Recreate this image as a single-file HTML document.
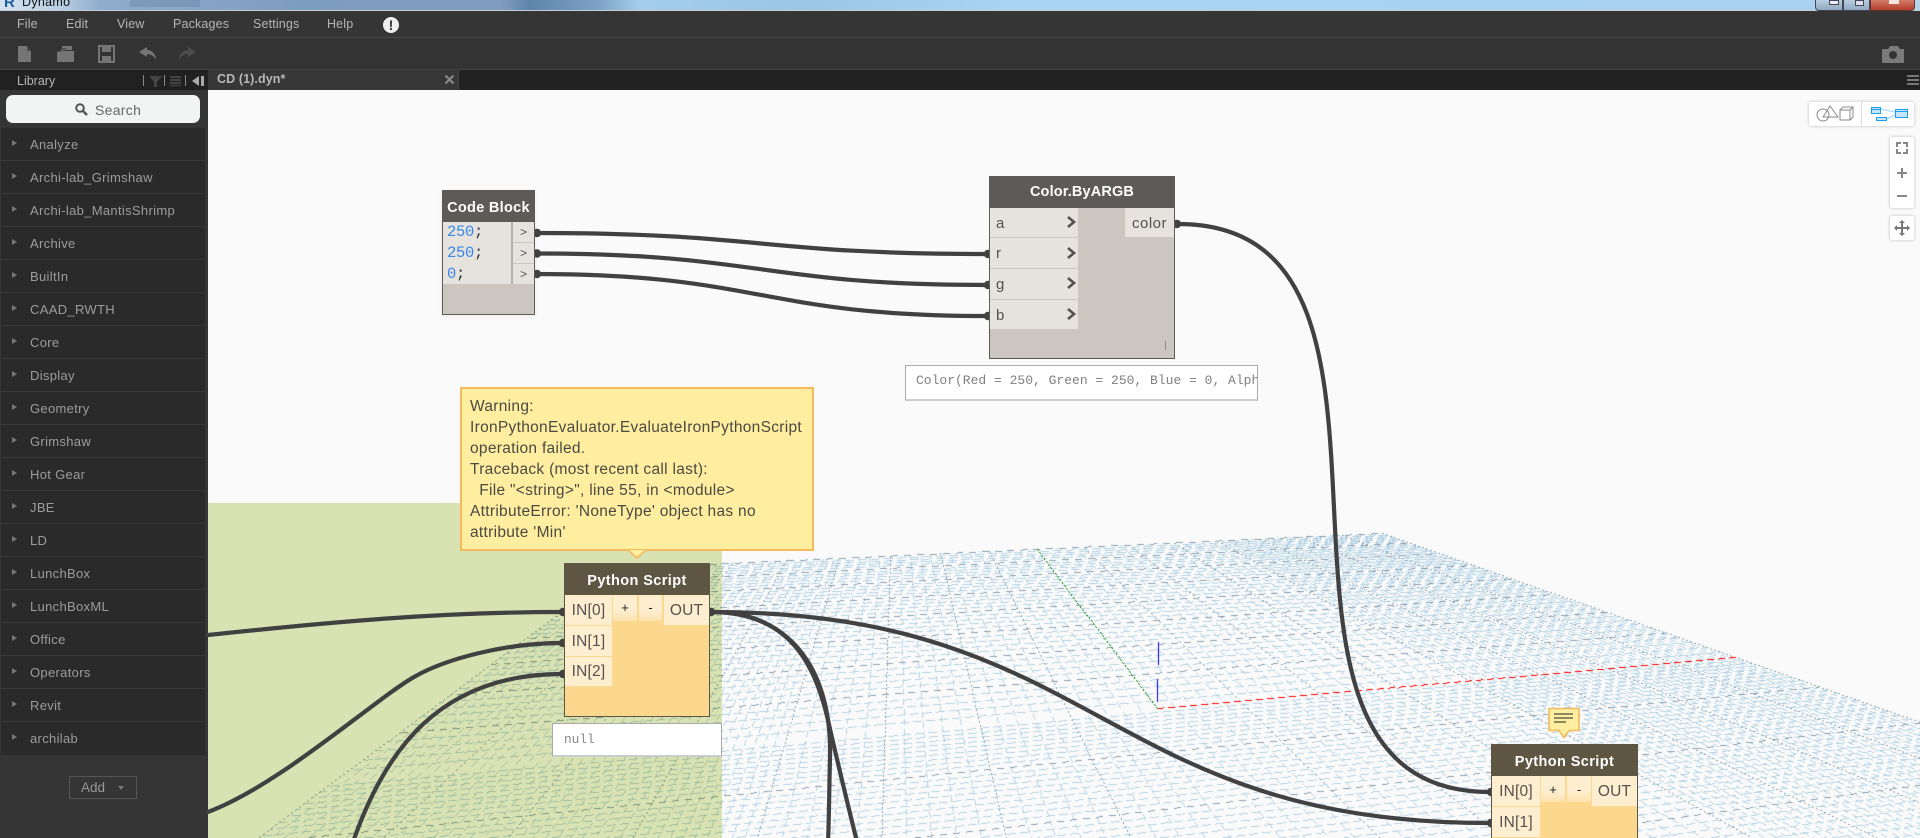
<!DOCTYPE html>
<html><head><meta charset="utf-8"><title>Dynamo</title>
<style>
html,body{margin:0;padding:0;width:1920px;height:838px;overflow:hidden;background:#fafafa;font-family:"Liberation Sans",sans-serif}
.a{position:absolute;white-space:nowrap;box-sizing:border-box}
#root{position:absolute;left:0;top:0;width:1920px;height:838px;overflow:hidden}
.m{color:#b5b5b5;font-size:12.5px;top:17px;letter-spacing:.15px}
.li{left:1px;width:204px;height:33px;background:#2a2a2a;border-bottom:1px solid #3a3a3a;color:#9c9c9c;font-size:13px;letter-spacing:.32px;line-height:34px;padding-left:29px}
.li:before{content:"";position:absolute;left:11px;top:12px;border-left:5px solid #777;border-top:3.5px solid transparent;border-bottom:3.5px solid transparent}
.hd{color:#fff;font-weight:bold;font-size:14.5px;text-align:center}
.row{background:#e6e3de;color:#55514f;font-size:15px;letter-spacing:.5px;padding-left:6px}
.py{background:#fdeed0;color:#55514f;font-size:15.5px;text-align:center;letter-spacing:.2px}
.tip{font-size:15.5px;color:#4a4a42;letter-spacing:.3px}
.mono{font-family:"Liberation Mono",monospace}
</style></head>
<body><div id="root">
<!-- canvas background -->
<div class="a" style="left:208px;top:90px;width:1712px;height:748px;background:#fafafa"></div>
<canvas id="g" width="1712" height="748" class="a" style="left:208px;top:90px"></canvas>
<div class="a" style="left:208px;top:503px;width:514px;height:335px;background:#dee7b6;mix-blend-mode:multiply"></div>

<!-- title bar -->
<div class="a" style="left:0;top:0;width:1920px;height:10px;background:linear-gradient(90deg,#d4e2ee 0,#b9cfe3 60px,#8fadcd 100px,#7d9dc0 300px,#7f9dbf 500px,#5f84ab 530px,#7fa3c6 600px,#a4cdec 640px,#9cc6e6 800px,#a8d3f2 1000px,#a8d2f0 1810px,#b5d5ec 1920px)"></div>
<div class="a" style="left:130px;top:0;width:70px;height:7px;background:#6d88a6;opacity:.45"></div>
<div class="a" style="left:0;top:10px;width:1920px;height:1px;background:#c5cdd6"></div>
<div class="a" style="left:4px;top:0;width:12px;height:10px;color:#1d5e9e;font-weight:bold;font-size:15px;line-height:6px;overflow:hidden">R</div>
<div class="a" style="left:22px;top:-5px;font-size:12.5px;color:#111;line-height:14px;letter-spacing:.3px">Dynamo</div>
<div class="a" style="left:1815px;top:-2px;width:28px;height:13px;background:linear-gradient(#bcd0e2,#8fa9c0);border:1px solid #445;border-radius:0 0 0 4px"></div>
<div class="a" style="left:1843px;top:-2px;width:27px;height:13px;background:linear-gradient(#bcd0e2,#8fa9c0);border:1px solid #445"></div>
<div class="a" style="left:1870px;top:-2px;width:45px;height:13px;background:linear-gradient(#d8836f,#b23d2a);border:1px solid #633;border-radius:0 0 4px 0"></div>
<div class="a" style="left:1829px;top:0;width:10px;height:5px;background:#eef;border:1px solid #445"></div>
<div class="a" style="left:1855px;top:0;width:9px;height:6px;background:#dde;border:1px solid #445"></div>
<div class="a" style="left:1889px;top:0;width:10px;height:4px;background:#f4e4e0"></div>

<!-- menu -->
<div class="a" style="left:0;top:11px;width:1920px;height:27px;background:#353535;border-bottom:1px solid #474747"></div>
<div class="a m" style="left:17px">File</div>
<div class="a m" style="left:66px">Edit</div>
<div class="a m" style="left:117px">View</div>
<div class="a m" style="left:173px">Packages</div>
<div class="a m" style="left:253px">Settings</div>
<div class="a m" style="left:327px">Help</div>
<div class="a" style="left:383px;top:17px;width:16px;height:16px;border-radius:50%;background:#efefef;color:#333;font-weight:bold;font-size:14px;text-align:center;line-height:16px">!</div>

<!-- toolbar -->
<div class="a" style="left:0;top:38px;width:1920px;height:32px;background:#333;border-bottom:1px solid #444"></div>
<svg class="a" style="left:0;top:38px" width="220" height="32" viewBox="0 38 220 32">
<path d="M18 46h9l4 5v11H18z" fill="#757575"/><path d="M27 46l4 5h-4z" fill="#4a4a4a"/>
<path d="M62 46h10v4H62zM57 52l5-1h12v11H57z" fill="#757575"/><path d="M60 51l2-3h5l-2 3z" fill="#555"/>
<path d="M99 46h15v16H99z" fill="none" stroke="#757575" stroke-width="2"/><path d="M102 47h9v5h-9zM102 56h9v5h-9z" fill="#757575"/>
<path d="M139 52l8-5v3c5 0 9 4 9 10-2-4-5-6-9-6v3z" fill="#757575"/>
<path d="M196 52l-8-5v3c-5 0-9 4-9 10 2-4 5-6 9-6v3z" fill="#4c4c4c"/>
</svg>
<svg class="a" style="left:1880px;top:44px" width="30" height="24"><path d="M2 5h6l2-3h8l2 3h4v14H2z" fill="#7a7a7a"/><circle cx="13" cy="11" r="4" fill="#333"/></svg>

<!-- tab row -->
<div class="a" style="left:0;top:70px;width:208px;height:20px;background:#212121"></div>
<div class="a" style="left:208px;top:70px;width:250px;height:20px;background:#373737"></div>
<div class="a" style="left:458px;top:70px;width:1462px;height:20px;background:#222;border-left:1px solid #444"></div>
<div class="a" style="left:17px;top:74px;font-size:12.5px;color:#b5b5b5">Library</div>
<div class="a" style="left:217px;top:72px;font-size:12.5px;font-weight:bold;color:#b8b8b8;letter-spacing:.1px">CD (1).dyn*</div>
<svg class="a" style="left:140px;top:72px" width="70" height="18"><path d="M3.5 3v11M24.5 3v11M45.5 3v11" stroke="#888"/><path d="M9 4h13l-5 6v5h-3v-5z" fill="#444"/><path d="M30 4h11v2H30zM30 7h11v2H30zM30 10h11v2H30zM30 13h11v1H30z" fill="#444"/><path d="M59 4v10l-7-5z" fill="#aaa"/><path d="M61 4h3v10h-3z" fill="#aaa"/></svg>
<svg class="a" style="left:443px;top:73px" width="14" height="14"><path d="M2.5 2.5l8 8M10.5 2.5l-8 8" stroke="#8a8a8a" stroke-width="2"/></svg>
<div class="a" style="left:1907px;top:75px;width:12px;height:2px;background:#777;box-shadow:0 4px 0 #777,0 8px 0 #777"></div>

<!-- sidebar -->
<div class="a" style="left:0;top:90px;width:208px;height:748px;background:#353535"></div>
<div class="a" style="left:6px;top:95px;width:194px;height:28px;background:#f2f3f3;border-radius:7px"></div>
<svg class="a" style="left:74px;top:102px" width="14" height="14"><circle cx="6" cy="6" r="3.8" fill="none" stroke="#555" stroke-width="2"/><path d="M9 9l4 4" stroke="#555" stroke-width="2.4"/></svg>
<div class="a" style="left:95px;top:102px;font-size:14px;color:#666;letter-spacing:.3px">Search</div>
<div class="a li" style="top:128px">Analyze</div>
<div class="a li" style="top:161px">Archi-lab_Grimshaw</div>
<div class="a li" style="top:194px">Archi-lab_MantisShrimp</div>
<div class="a li" style="top:227px">Archive</div>
<div class="a li" style="top:260px">BuiltIn</div>
<div class="a li" style="top:293px">CAAD_RWTH</div>
<div class="a li" style="top:326px">Core</div>
<div class="a li" style="top:359px">Display</div>
<div class="a li" style="top:392px">Geometry</div>
<div class="a li" style="top:425px">Grimshaw</div>
<div class="a li" style="top:458px">Hot Gear</div>
<div class="a li" style="top:491px">JBE</div>
<div class="a li" style="top:524px">LD</div>
<div class="a li" style="top:557px">LunchBox</div>
<div class="a li" style="top:590px">LunchBoxML</div>
<div class="a li" style="top:623px">Office</div>
<div class="a li" style="top:656px">Operators</div>
<div class="a li" style="top:689px">Revit</div>
<div class="a li" style="top:722px;border-bottom:0">archilab</div>
<div class="a" style="left:69px;top:776px;width:68px;height:23px;border:1px solid #555;color:#999;font-size:13.5px;line-height:21px;padding-left:11px">Add</div>
<div class="a" style="left:118px;top:786px;border-top:4px solid #777;border-left:3px solid transparent;border-right:3px solid transparent"></div>

<!-- top right controls -->
<div class="a" style="left:1809px;top:102px;width:105px;height:24px;background:#fff;box-shadow:0 0 3px #bbb;border-radius:2px"></div>
<div class="a" style="left:1861px;top:102px;width:1px;height:24px;background:#ddd"></div>
<svg class="a" style="left:1809px;top:102px" width="105" height="24" fill="none">
<circle cx="14" cy="13" r="6" stroke="#888"/><path d="M21 4l8 11H14z" stroke="#888"/><path d="M31 8h10v10H31zM31 8l3-3h10v10l-3 3M41 8l3-3" stroke="#888"/>
<path d="M62.5 5.5h9v6h-9zM86.5 7.5h12v8h-12zM67.5 15.5h10v3h-10z" fill="#c8e4fa" stroke="#18a0f0"/><path d="M63 7.5h9M87 9.5h11" stroke="#18a0f0"/>
<path d="M72 7l14 3M78 17l8-4" stroke="#9ad4f8"/></svg>
<div class="a" style="left:1890px;top:137px;width:24px;height:71px;background:#fff;box-shadow:0 0 3px #bbb;border-radius:2px"></div>
<svg class="a" style="left:1890px;top:137px" width="24" height="71" fill="none" stroke="#888" stroke-width="2">
<path d="M7 10V6h4M13 6h4v4M17 12v4h-4M11 16H7v-4"/><path d="M12 31v10M7 36h10"/><path d="M7 59h10"/></svg>
<div class="a" style="left:1890px;top:216px;width:24px;height:24px;background:#fff;box-shadow:0 0 3px #bbb;border-radius:2px"></div>
<svg class="a" style="left:1890px;top:216px" width="24" height="24"><path d="M12 4l3 3h-2v4h4V9l3 3-3 3v-2h-4v4h2l-3 3-3-3h2v-4H7v2l-3-3 3-3v2h4V7H9z" fill="#777"/></svg>

<!-- wires -->
<svg class="a" style="left:0;top:0" width="1920" height="838" fill="none" stroke="#414141" stroke-width="4.2" stroke-linecap="round">
<path d="M536 233C760 233 762 254 987 254"/>
<path d="M536 253.5C760 253.5 762 285 987 285"/>
<path d="M536 274C760 274 762 316 987 316"/>
<path d="M1178 224C1462 224 1206 792 1490 792"/>
<path d="M208 635C330 622 440 612 562 612"/>
<path d="M208 812C280 785 374 700 414 677C445 659 505 643 562 643"/>
<path d="M353 842C385 750 440 674 562 674"/>
<path d="M712 612C1100 612 1102 823 1490 823"/>
<path d="M712 612C790 612 832 670 830 757C829 800 829 820 828 842"/>
<path d="M712 612C790 612 815 665 828 720C838 765 848 805 857 842"/>
<g fill="#414141" stroke="none">
<circle cx="537" cy="233" r="4.2"/><circle cx="537" cy="253.5" r="4.2"/><circle cx="537" cy="274" r="4.2"/>
<circle cx="988" cy="254" r="4.2"/><circle cx="988" cy="285" r="4.2"/><circle cx="988" cy="316" r="4.2"/>
<circle cx="1177" cy="224" r="4.2"/><circle cx="563" cy="612" r="4.2"/><circle cx="563" cy="643" r="4.2"/><circle cx="563" cy="674" r="4.2"/><circle cx="711" cy="612" r="4.2"/>
<circle cx="1491" cy="792" r="4.2"/><circle cx="1491" cy="823" r="4.2"/></g>
</svg>

<!-- Code Block -->
<div class="a" style="left:442px;top:190px;width:93px;height:125px;background:#cbc7c0;border:1px solid #5d5a57;box-shadow:0 2px 6px rgba(0,0,0,.05)"></div>
<div class="a hd" style="left:442px;top:190px;width:93px;height:32px;background:#5d5a57;line-height:36px;font-size:14.5px;letter-spacing:.3px">Code Block</div>
<div class="a" style="left:443px;top:222px;width:68px;height:62px;background:#e6e3df"></div>
<div class="a" style="left:511px;top:222px;width:2px;height:62px;background:#b5b2ac"></div>
<div class="a" style="left:513px;top:222px;width:21px;height:20px;background:#e6e3df;color:#555;font-size:12px;text-align:center;line-height:20px">&gt;</div>
<div class="a" style="left:513px;top:243px;width:21px;height:20px;background:#e6e3df;color:#555;font-size:12px;text-align:center;line-height:21px">&gt;</div>
<div class="a" style="left:513px;top:264px;width:21px;height:20px;background:#e6e3df;color:#555;font-size:12px;text-align:center;line-height:20px">&gt;</div>
<div class="a mono" style="left:447px;top:222px;font-size:15.5px;line-height:21px;color:#333;white-space:pre;letter-spacing:-.3px"><span style="color:#3a88e6">250</span>;
<span style="color:#3a88e6">250</span>;
<span style="color:#3a88e6">0</span>;</div>

<!-- Color.ByARGB -->
<div class="a" style="left:989px;top:176px;width:186px;height:183px;background:#cbc7c0;border:1px solid #5d5a57"></div>
<div class="a hd" style="left:989px;top:176px;width:186px;height:32px;background:#5d5a57;line-height:33px;letter-spacing:.15px">Color.ByARGB</div>
<div class="a row" style="left:990px;top:208px;width:88px;height:29px;line-height:31px">a</div>
<div class="a row" style="left:990px;top:238px;width:88px;height:30px;line-height:31px">r</div>
<div class="a row" style="left:990px;top:269px;width:88px;height:30px;line-height:31px">g</div>
<div class="a row" style="left:990px;top:300px;width:88px;height:29px;line-height:31px">b</div>
<div class="a row" style="left:1125px;top:208px;width:49px;height:29px;line-height:31px;padding-left:7px">color</div>
<svg class="a" style="left:1066px;top:215px" width="14" height="110" fill="none" stroke="#55514f" stroke-width="2.6"><path d="M2 2l6 5-6 5M2 33l6 5-6 5M2 63l6 5-6 5M2 94l6 5-6 5"/></svg>
<div class="a" style="left:1165px;top:341px;width:1px;height:9px;background:#888"></div>
<div class="a mono" style="left:905px;top:365px;width:353px;height:36px;background:#fff;border:1px solid #a9a9a9;border-bottom:2px solid #ccc;overflow:hidden;color:#808080;font-size:13px;line-height:30px;padding-left:10px">Color(Red = 250, Green = 250, Blue = 0, Alph</div>

<!-- warning -->
<div class="a" style="left:460px;top:387px;width:354px;height:164px;background:#ffeda0;border:2px solid #f5ba5c"></div>
<svg class="a" style="left:627px;top:549px" width="20" height="11"><path d="M1 1l9 8 9-8" fill="#ffeda0" stroke="#f5ba5c" stroke-width="1.6"/></svg>
<div class="a tip" style="left:470px;top:396px;line-height:21px;white-space:pre">Warning:
IronPythonEvaluator.EvaluateIronPythonScript
operation failed.
Traceback (most recent call last):
  File "&lt;string&gt;", line 55, in &lt;module&gt;
AttributeError: 'NoneType' object has no
attribute 'Min'</div>

<!-- Python node 1 -->
<div class="a" style="left:564px;top:563px;width:146px;height:154px;background:#fcd88e;border:1px solid #5e5542"></div>
<div class="a hd" style="left:564px;top:563px;width:146px;height:32px;background:#5e5542;line-height:37px;letter-spacing:.4px">Python Script</div>
<div class="a py" style="left:565px;top:595px;width:47px;height:30px;line-height:31px">IN[0]</div>
<div class="a py" style="left:565px;top:626px;width:47px;height:30px;line-height:31px">IN[1]</div>
<div class="a py" style="left:565px;top:657px;width:47px;height:29px;line-height:30px">IN[2]</div>
<div class="a" style="left:613px;top:595px;width:24px;height:26px;background:linear-gradient(#fdeed0 60%,#fde3ae);color:#222;font-size:13px;text-align:center;line-height:25px">+</div>
<div class="a" style="left:639px;top:595px;width:23px;height:26px;background:linear-gradient(#fdeed0 60%,#fde3ae);color:#222;font-size:13px;text-align:center;line-height:25px">-</div>
<div class="a py" style="left:664px;top:595px;width:45px;height:30px;line-height:31px">OUT</div>
<div class="a mono" style="left:552px;top:723px;width:170px;height:34px;background:#fff;border:1px solid #a9a9a9;border-bottom:2px solid #ccc;color:#888;font-size:12.8px;line-height:31px;padding-left:11px">null</div>

<!-- Python node 2 -->
<div class="a" style="left:1491px;top:744px;width:147px;height:100px;background:#fcd88e;border:1px solid #5e5542"></div>
<div class="a hd" style="left:1491px;top:744px;width:147px;height:32px;background:#5e5542;line-height:36px;letter-spacing:.4px">Python Script</div>
<div class="a py" style="left:1492px;top:776px;width:48px;height:30px;line-height:31px">IN[0]</div>
<div class="a py" style="left:1492px;top:807px;width:48px;height:30px;line-height:31px">IN[1]</div>
<div class="a" style="left:1541px;top:776px;width:24px;height:26px;background:linear-gradient(#fdeed0 60%,#fde3ae);color:#222;font-size:13px;text-align:center;line-height:27px">+</div>
<div class="a" style="left:1567px;top:776px;width:24px;height:26px;background:linear-gradient(#fdeed0 60%,#fde3ae);color:#222;font-size:13px;text-align:center;line-height:27px">-</div>
<div class="a py" style="left:1592px;top:776px;width:45px;height:30px;line-height:31px">OUT</div>
<svg class="a" style="left:1548px;top:707px" width="34" height="33"><path d="M1 1.5h30v22H21l-5 7-5-7H1z" fill="#ffeda0" stroke="#f5ba5c" stroke-width="1.6"/><path d="M6 7h19M6 11h19M6 15h12" stroke="#222" stroke-width="1"/></svg>
</div>
<script>
(function(){
var c=document.getElementById('g'),W=c.width,H=c.height,x=c.getContext('2d'),im=x.createImageData(W,H),d=im.data;
var src=[[-1,-1],[1,-1],[1,0],[0,0]],dst=[[620,568],[1382,533],[1735,657],[1157,708]],A=[];
for(var i=0;i<4;i++){var u=src[i][0],v=src[i][1],X=dst[i][0],Y=dst[i][1];
A.push([u,v,1,0,0,0,-u*X,-v*X,X]);A.push([0,0,0,u,v,1,-u*Y,-v*Y,Y]);}
for(var p=0;p<8;p++){var m=p;for(var r=p+1;r<8;r++)if(Math.abs(A[r][p])>Math.abs(A[m][p]))m=r;var t=A[p];A[p]=A[m];A[m]=t;
for(var r=0;r<8;r++)if(r!=p){var f=A[r][p]/A[p][p];for(var k=p;k<9;k++)A[r][k]-=f*A[p][k];}}
var h=[];for(var i=0;i<8;i++)h.push(A[i][8]/A[i][i]);
function P(u,v){var w=h[6]*u+h[7]*v+1;if(w<=0.02)return null;return[(h[0]*u+h[1]*v+h[2])/w,(h[3]*u+h[4]*v+h[5])/w];}
function ok(q){return q&&q[0]>-200&&q[0]<2200&&q[1]>500&&q[1]<900;}
function line(fn,col,on,off,phase){var a=null,b=null;for(var i=0;i<=500;i++){var s=-1+2*i/500,q=fn(s);if(ok(q)){if(!a)a=q;b=q;}}
if(!a)return;var dx=b[0]-a[0],dy=b[1]-a[1],n=Math.ceil(Math.max(Math.abs(dx),Math.abs(dy)));
for(var i=0;i<=n;i++){if(((i+phase)%(on+off))>=on)continue;var X=Math.round(a[0]+dx*i/n)-208,Y=Math.round(a[1]+dy*i/n)-90;
if(X<0||Y<0||X>=W||Y>=H)continue;var o=(Y*W+X)*4;d[o]=col[0];d[o+1]=col[1];d[o+2]=col[2];d[o+3]=255;}}
var L=[181,211,228],D=[138,160,176],N=40;
for(var j=-N*2;j<=N*2;j++){if(j%10==0)continue;(function(j){
if(j>0)line(function(s){return P(s,j/(N*2))},L,9,4,(j*5+200)%13);
if(j%2==0&&j<=0)line(function(s){return P(s,j/(N*2))},L,9,4,(j*5+200)%13);
if(j%2==0||Math.abs(j)>N)line(function(s){return P(j/(N*2),s)},L,6,4,(j*3+300)%10);})(j);}
for(var j=-N*2;j<=N*2;j+=10){if(j==0)continue;(function(j){
line(function(s){return P(s,j/(N*2))},D,7,6,(j*7+900)%13);
line(function(s){return P(j/(N*2),s)},D,2,2,0);})(j);}
(function(){line(function(s){return P((s+1)/2,0)},[255,0,0],7,4,0);
line(function(s){return P(0,(s-1)/2)},[0,128,0],2,1,0);
line(function(s){return[1158,642+(s+1)*11]},[0,0,255],99,0,0);
line(function(s){return[1157,679+(s+1)*11]},[0,0,255],99,0,0);})();
x.putImageData(im,0,0);
})();
</script>
</body></html>
